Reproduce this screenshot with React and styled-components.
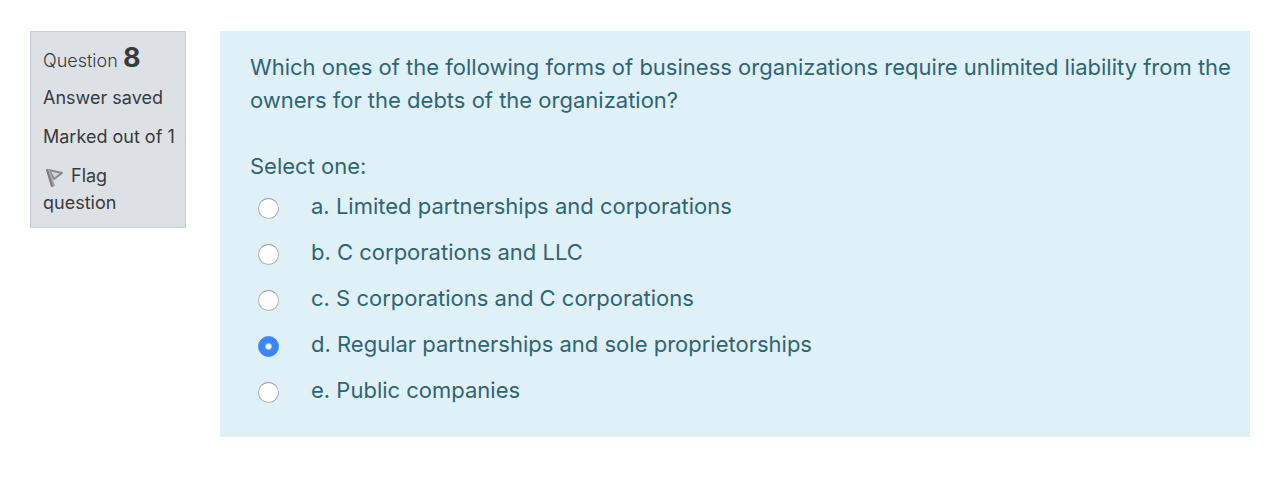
import React, { useState } from "react";
import styled, { createGlobalStyle } from "styled-components";

const GlobalStyle = createGlobalStyle`
  * { box-sizing: border-box; }
  body {
    margin: 0;
    background: #fff;
    font-family: Inter, "Liberation Sans", sans-serif;
  }
`;

const Page = styled.main`
  display: flex;
  align-items: flex-start;
  gap: 34px;
  padding: 31px 30px 44px;
`;

const Info = styled.aside`
  flex: 0 0 156px;
  padding: 8px 8px 11px 12px;
  border: 1px solid #c4ccd5;
  background: #dde1e6;
  color: #373a3c;
  font-size: 18px;
  line-height: 27px;
`;

const Heading = styled.h3`
  margin: 0 0 6px;
  font-size: 18px;
  font-weight: 300;
  line-height: 35px;
`;

const Number = styled.span`
  font-size: 27px;
  font-weight: 700;
`;

const State = styled.div`
  margin-bottom: 12px;
  white-space: nowrap;
`;

const FlagButton = styled.button`
  display: block;
  padding: 0;
  border: 0;
  background: none;
  color: inherit;
  font: inherit;
  text-align: left;
`;

const FlagIcon = styled.svg`
  width: 24px;
  height: 24px;
  margin-right: 4px;
  vertical-align: -7px;
`;

const Panel = styled.form`
  flex: 1;
  min-width: 0;
  padding: 20px 16px 17px 30px;
  background: #dff1f7;
  color: #2f6473;
  font-size: 22px;
  line-height: 33px;
`;

const QuestionText = styled.p`
  margin: 0 0 33px;
`;

const Answers = styled.fieldset`
  margin: 0;
  padding: 0;
  border: 0;
`;

const Prompt = styled.legend`
  padding: 0;
  margin-bottom: 7px;
`;

const Answer = styled.label`
  display: flex;
  align-items: center;
  gap: 32px;
  padding-left: 8px;
  margin-bottom: 13px;
`;

const Radio = styled.input`
  appearance: none;
  flex: none;
  width: 21px;
  height: 21px;
  margin: 3px 0 0;
  border: 1px solid #adb3b6;
  border-top-color: #949a9d;
  border-radius: 50%;
  background: #fff;

  &:checked {
    border-color: #3b86f7;
    background: radial-gradient(circle, #fff 2px, #3b86f7 4px);
  }
`;

const options = [
  "a. Limited partnerships and corporations",
  "b. C corporations and LLC",
  "c. S corporations and C corporations",
  "d. Regular partnerships and sole proprietorships",
  "e. Public companies",
];

export default function App() {
  const [selected, setSelected] = useState(3);
  return (
    <>
      <GlobalStyle />
      <Page>
        <Info>
          <Heading>Question <Number>8</Number></Heading>
          <State>Answer saved</State>
          <State>Marked out of 1</State>
          <FlagButton type="button">
            <FlagIcon viewBox="0 0 24 24" aria-hidden="true">
              <path d="M6 5 L19 8 L11 14 Z" fill="#d2d4d6" stroke="#8a8a8a" strokeWidth="2" strokeLinejoin="round" />
              <path d="M3 4 L8 22 L12 21 L7 5 Z" fill="#a5a5a5" />
              <path d="M4 5 L9 21" stroke="#7c7c7c" strokeWidth="2" strokeLinecap="round" />
            </FlagIcon>
            Flag question
          </FlagButton>
        </Info>
        <Panel>
          <QuestionText>
            Which ones of the following forms of business organizations require unlimited liability from the owners for the debts of the organization?
          </QuestionText>
          <Answers>
            <Prompt>Select one:</Prompt>
            {options.map((text, i) => (
              <Answer key={text}>
                <Radio type="radio" name="answer" checked={selected === i} onChange={() => setSelected(i)} />
                {text}
              </Answer>
            ))}
          </Answers>
        </Panel>
      </Page>
    </>
  );
}
